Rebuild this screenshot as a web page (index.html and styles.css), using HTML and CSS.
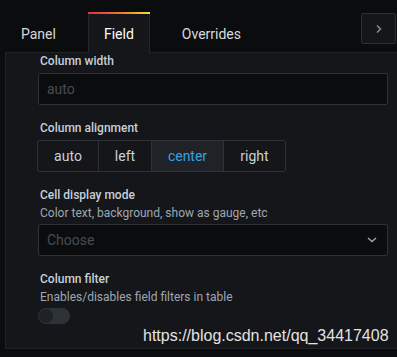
FILE: index.html
```html
<!DOCTYPE html>
<html lang="en">
<head>
  <meta charset="UTF-8">
  <meta name="viewport" content="width=device-width, initial-scale=1.0">
  <title>Field options</title>
  <link rel="stylesheet" href="styles.css">
</head>
<body>
  <div class="tabs">
    <div class="tab">Panel</div>
    <div class="tab active">Field</div>
    <div class="tab">Overrides</div>
    <button class="collapse" type="button">
      <svg width="8" height="10" viewBox="0 0 8 10"><path d="M2 1.5 L5.5 5 L2 8.5" fill="none" stroke="#8e939b" stroke-width="1.4"/></svg>
    </button>
  </div>

  <main class="panel">
    <div class="field">
      <label class="field-label">Column width</label>
      <div class="input">auto</div>
    </div>

    <div class="field">
      <label class="field-label">Column alignment</label>
      <div class="radio-group">
        <div class="radio">auto</div>
        <div class="radio">left</div>
        <div class="radio active">center</div>
        <div class="radio">right</div>
      </div>
    </div>

    <div class="field">
      <label class="field-label">Cell display mode</label>
      <div class="field-desc">Color text, background, show as gauge, etc</div>
      <div class="input select">
        <span>Choose</span>
        <svg width="10" height="6" viewBox="0 0 10 6"><path d="M1 1 L5 4.6 L9 1" fill="none" stroke="#9fa7b3" stroke-width="1.4"/></svg>
      </div>
    </div>

    <div class="field">
      <label class="field-label">Column filter</label>
      <div class="field-desc">Enables/disables field filters in table</div>
      <div class="switch"><span class="knob"></span></div>
    </div>
  </main>

  <div class="watermark">https://blog.csdn.net/qq_34417408</div>
</body>
</html>
```

FILE: styles.css
```css
* {
  margin: 0;
  padding: 0;
  box-sizing: border-box;
}
body {
  font-family: Roboto, "Liberation Sans", sans-serif;
  background-color: #0b0c0e;
  width: 397px;
  height: 357px;
  overflow: hidden;
  position: relative;
}
.tabs {
  height: 52px;
  display: flex;
  align-items: flex-end;
  padding-left: 5px;
  gap: 16px;
  position: relative;
}
.tab {
  height: 40px;
  padding: 3px 16px 0;
  display: flex;
  align-items: center;
  font-size: 14px;
  color: #d8d9da;
}
.tab.active {
  color: #ffffff;
  background-color: #141619;
  border-left: 1px solid #25272b;
  border-right: 1px solid #25272b;
  padding: 3px 15px 0;
  position: relative;
  margin-bottom: -1px;
  height: 41px;
  z-index: 1;
}
.tab.active::before {
  content: "";
  position: absolute;
  top: 0;
  left: -1px;
  right: -1px;
  height: 2px;
  background: linear-gradient(90deg, #e02f44, #f0782d 55%, #fade2a);
}
.collapse {
  position: absolute;
  right: 1px;
  top: 13px;
  width: 35px;
  height: 31px;
  background-color: #141619;
  border: 1px solid #2c2f33;
  border-radius: 2px;
  display: flex;
  align-items: center;
  justify-content: center;
}
.panel {
  background-color: #141619;
  border-top: 1px solid #202226;
  border-left: 1px solid #202226;
  border-bottom: 1px solid #202226;
  margin-left: 5px;
  height: 297px;
  padding: 0 9px 0 32px;
  display: flex;
  flex-direction: column;
  gap: 15px;
}
.field {
  display: flex;
  flex-direction: column;
}
.field-label {
  font-size: 12px;
  font-weight: 500;
  line-height: 16px;
  color: #c7d0d9;
  margin-bottom: 4px;
  padding-left: 2px;
}
.field-desc {
  font-size: 12px;
  line-height: 16px;
  color: #9fa7b3;
  margin: -2px 0 3px 2px;
}
.input {
  height: 32px;
  background-color: #0b0c0e;
  border: 1px solid #2c3235;
  border-radius: 2px;
  padding: 0 8px;
  display: flex;
  align-items: center;
  font-size: 14px;
  color: #464c54;
}
.select {
  justify-content: space-between;
  padding-right: 10px;
}
.radio-group {
  display: flex;
  align-self: flex-start;
  height: 32px;
  border: 1px solid #2c3235;
  border-radius: 2px;
  margin-left: -1px;
}
.radio {
  display: flex;
  align-items: center;
  justify-content: center;
  font-size: 14px;
  color: #c7d0d9;
  border-left: 1px solid #2c3235;
}
.radio:first-child {
  border-left: none;
}
.radio:nth-child(1) { width: 60px; }
.radio:nth-child(2) { width: 53px; }
.radio:nth-child(3) { width: 72px; }
.radio:nth-child(4) { width: 62px; }
.radio.active {
  background-color: #1f2227;
  color: #33a2e5;
}
.switch {
  width: 32px;
  height: 16px;
  border-radius: 8px;
  background-color: #2c3235;
  padding: 1px;
}
.knob {
  display: block;
  width: 14px;
  height: 14px;
  border-radius: 50%;
  background-color: #1e2226;
}
.watermark {
  position: absolute;
  left: 143px;
  top: 327px;
  font-family: "Liberation Sans", Arial, sans-serif;
  font-size: 16px;
  color: #e3e3e3;
}
```
